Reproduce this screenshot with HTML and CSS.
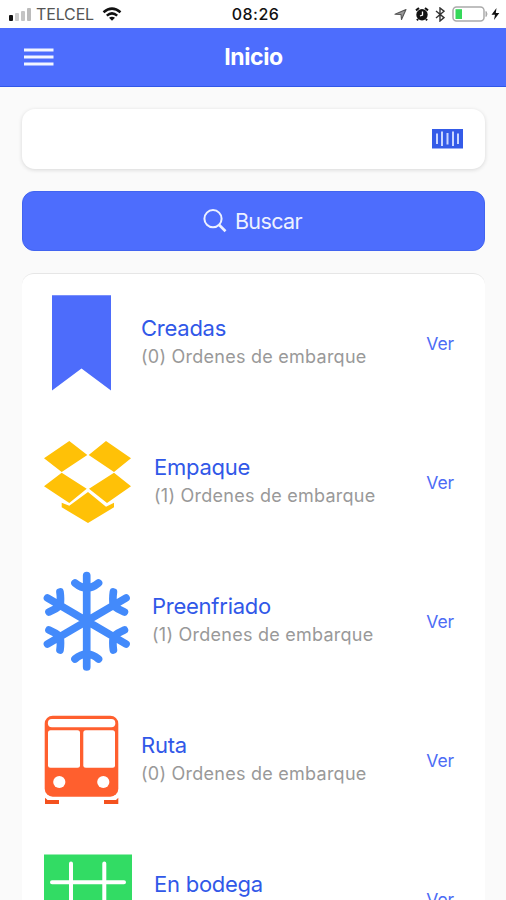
FILE: index.html
```html
<!DOCTYPE html>
<html lang="es">
<head>
<meta charset="utf-8">
<title>Inicio</title>
<link rel="stylesheet" href="styles.css">
</head>
<body>
<div class="status">
  <div class="status-side">
    <svg class="signal" width="24" height="14" viewBox="0 0 24 14"><rect x="1" y="8" width="4" height="6" rx="1" fill="#111"/><rect x="7" y="6" width="4" height="8" rx="1" fill="#ccc"/><rect x="13" y="4" width="4" height="10" rx="1" fill="#c4c4c4"/><rect x="19" y="1" width="4" height="13" rx="1" fill="#bbb"/></svg>
    <span class="carrier">TELCEL</span>
    <svg class="wifi" width="20" height="14" viewBox="0 0 20 14" fill="none" stroke="#111" stroke-width="2.5"><path d="M1.5 5.2Q10-2 18.5 5.2M4.8 8.6Q10 4.2 15.2 8.6"/><path d="M7 10.8Q10 8.7 13 10.8L10 13.8Z" fill="#111" stroke="none"/></svg>
  </div>
  <span class="clock">08:26</span>
  <div class="status-side status-right">
    <svg width="13" height="13" viewBox="0 0 13 13"><path d="M1 6.2L12 1.5L7.5 11.5L7 6.5Z" fill="#999" stroke="#555" stroke-width="1.1" stroke-linejoin="round"/></svg>
    <svg class="alarm" width="14" height="14" viewBox="0 0 14 14"><circle cx="7" cy="7.7" r="5.7" fill="#111"/><path d="M1 3.4L4 1M10 1L13 3.4M3 12L2 13.4M11 12L12 13.4" stroke="#111" stroke-width="2"/><path d="M7.5 4.5V8L5 9" fill="none" stroke="#fff" stroke-width="1.3"/></svg>
    <svg class="bluetooth" width="10" height="15" viewBox="0 0 10 15" fill="none" stroke="#333" stroke-width="1.4"><path d="M1 4L9 10.6L5 14V1L9 4.2L1 11"/></svg>
    <svg class="battery" width="49" height="16" viewBox="0 0 49 16"><rect x="1" y="1" width="31" height="14" rx="3.5" fill="#fff" stroke="#aaa" stroke-width="1.5"/><rect x="3.5" y="3.2" width="6.5" height="9.8" fill="#35d85a"/><path d="M34 5.5Q36 8 34 10.5Z" fill="#aaa" stroke="#aaa"/><path d="M44.5 2L39.5 8.7H43L42 14L47.3 7H43.8Z" fill="#111"/></svg>
  </div>
</div>
<header class="navbar">
  <svg class="menu" width="30" height="20" viewBox="0 0 30 20" stroke="#f2f5ff" stroke-width="2.8"><path d="M0 3H29.5M0 10H29.5M0 17H29.5"/></svg>
  <h1>Inicio</h1>
</header>
<main>
  <div class="field">
    <svg width="31" height="20" viewBox="0 0 31 20"><path fill="#345be8" d="M0 0H31V19.5H0Z"/><path d="M5 4.5V15M10 2.5V17M15.5 4V15.5M21 2.5V17M26 4.5V15" stroke="#c9d6ff" stroke-width="2"/></svg>
  </div>
  <button class="search">
    <svg width="24" height="24" viewBox="0 0 24 24" fill="none" stroke="#edf1ff"><circle cx="10" cy="9.7" r="8.6" stroke-width="2"/><path d="M16 15.7L22.5 22.3" stroke-width="2.7"/></svg>
    <span>Buscar</span>
  </button>
  <section class="list">
    <div class="row">
      <svg class="icon narrow" viewBox="0 0 75 110"><path fill="#4d6cfb" d="M8 7.3H67V102.5L37.5 80.5L8 102.5Z"/></svg>
      <div class="info"><h2>Creadas</h2><p>(0) Ordenes de embarque</p></div><a class="ver">Ver</a>
    </div>
    <div class="row">
      <svg class="icon" viewBox="0 0 88 110"><path fill="#ffc107" d="M25.3 14L43.3 28L17.7 45L0 31.3ZM62 14L87 31.3L70 45L44.7 28ZM17.7 45.7L42.7 61.7L25.3 76L0 59.3ZM70 45.7L87 59.3L63 76L45 61.7ZM44 65L62 79.7L70 75.7V80.3L44 96L17.7 80.3V75.7L25.3 78.7Z"/></svg>
      <div class="info"><h2>Empaque</h2><p>(1) Ordenes de embarque</p></div><a class="ver">Ver</a>
    </div>
    <div class="row">
      <svg class="icon snow" viewBox="0 0 88 110" fill="none" stroke="#438afb" stroke-width="7.7" stroke-linecap="round" stroke-linejoin="round"><path d="M43.7 9.5V101M4.5 32L83 78M83 32L4.5 78M32 17Q38 22 43.7 22Q49.5 22 55.5 17M32 93Q38 88 43.7 88Q49.5 88 55.5 93M17 26Q18 33 17 39.5Q13 43 6 46M70.4 26Q69.4 33 70.4 39.5Q74.4 43 81.4 46M17 84Q18 77 17 70.5Q13 67 6 64M70.4 84Q69.4 77 70.4 70.5Q74.4 67 81.4 64"/></svg>
      <div class="info"><h2>Preenfriado</h2><p>(1) Ordenes de embarque</p></div><a class="ver">Ver</a>
    </div>
    <div class="row">
      <svg class="icon narrow" viewBox="0 0 75 110"><rect x="0.7" y="10.7" width="73.6" height="81" rx="8" fill="#ff5f2e"/><g fill="#fff"><rect x="3.9" y="14" width="67.4" height="8.3" rx="4"/><rect x="4" y="25.3" width="32" height="37.4" rx="2.5"/><rect x="39.3" y="25.3" width="31.7" height="37.4" rx="2.5"/><circle cx="15.3" cy="77" r="6.1"/><circle cx="59.3" cy="77" r="6.1"/></g><path fill="#f4511e" d="M1 92.7L3.5 95H15V99H1ZM74.3 92.7L72 95H60V99H74.3Z"/></svg>
      <div class="info"><h2>Ruta</h2><p>(0) Ordenes de embarque</p></div><a class="ver">Ver</a>
    </div>
    <div class="row">
      <svg class="icon" viewBox="0 0 88 110"><path fill="#32dc64" d="M0 10.5H88V99H0Z"/><path d="M27 19.5V90M60.3 19.5V90M8 38.3H80M8 71.5H80" stroke="#fff" stroke-width="4" stroke-linecap="round"/></svg>
      <div class="info"><h2>En bodega</h2><p></p></div><a class="ver">Ver</a>
    </div>
  </section>
</main>
</body>
</html>
```
FILE: styles.css
```css
* { box-sizing: border-box; }
html, body { height: 100%; }
body {
  margin: 0;
  height: 900px;
  overflow: hidden;
  background: #fafafa;
  font-family: Inter, "Liberation Sans", sans-serif;
}
svg { display: block; flex: none; }
h1, h2, p { margin: 0; font-weight: 400; }
.status {
  height: 28px;
  display: grid;
  grid-template-columns: 1fr auto 1fr;
  align-items: center;
  padding: 0 5px 0 8px;
  background: #fff;
  color: #111;
}
.status-side { display: flex; align-items: center; }
.status-right { justify-content: flex-end; }
.carrier { margin-left: 4px; font-size: 16px; letter-spacing: -0.15px; color: #555; }
.wifi { margin-left: 8px; }
.clock { padding-left: 2px; font-size: 16px; font-weight: 500; letter-spacing: 0.5px; }
.alarm { margin-left: 8px; }
.bluetooth { margin-left: 6px; }
.battery { margin-left: 7px; }
.navbar {
  height: 59px;
  display: grid;
  grid-template-columns: 1fr auto 1fr;
  align-items: center;
  padding: 0 23px 0 24px;
  background: #4d6dfd;
  border-bottom: 1.5px solid #3157e8;
  color: #fff;
}
.navbar h1 { font-size: 23px; font-weight: 700; line-height: 28px; letter-spacing: -0.4px; }
main { padding: 22px 21px 0 22px; }
.field {
  height: 60px;
  display: flex;
  align-items: center;
  justify-content: flex-end;
  padding-right: 22px;
  border-radius: 13px;
  background: #fff;
  box-shadow: 0 1px 4px rgba(0, 0, 0, 0.14);
}
.search {
  width: 463px;
  height: 60px;
  margin: 22px 0 0;
  padding: 0 2px 0 0;
  display: flex;
  align-items: center;
  justify-content: center;
  gap: 8px;
  border: 1px solid #4264f0;
  border-radius: 12px;
  background: #4d6dfd;
  color: #edf1ff;
  font: 400 21.5px Inter, sans-serif;
  letter-spacing: -0.6px;
}
.list {
  margin-top: 22px;
  border-radius: 12px;
  border-top: 1px solid #e6e6e6;
  background: #fff;
}
.row {
  height: 139px;
  display: flex;
  align-items: center;
  padding: 0 31px 0 22px;
}
.icon { width: 88px; height: 110px; margin-bottom: 2px; }
.icon.narrow { width: 75px; }
.icon.snow { margin-left: -1px; }
.info { margin: 0 0 3px 22px; flex: 1; white-space: nowrap; }
.snow + .info { margin-left: 21px; }
h2 { font-size: 22px; line-height: 28px; letter-spacing: -0.25px; color: #3158e8; }
.info p { height: 28px; font-size: 18px; line-height: 29px; letter-spacing: 0.25px; color: #999; }
.ver { font-size: 17.5px; letter-spacing: -0.1px; color: #4d6cf5; }
```
